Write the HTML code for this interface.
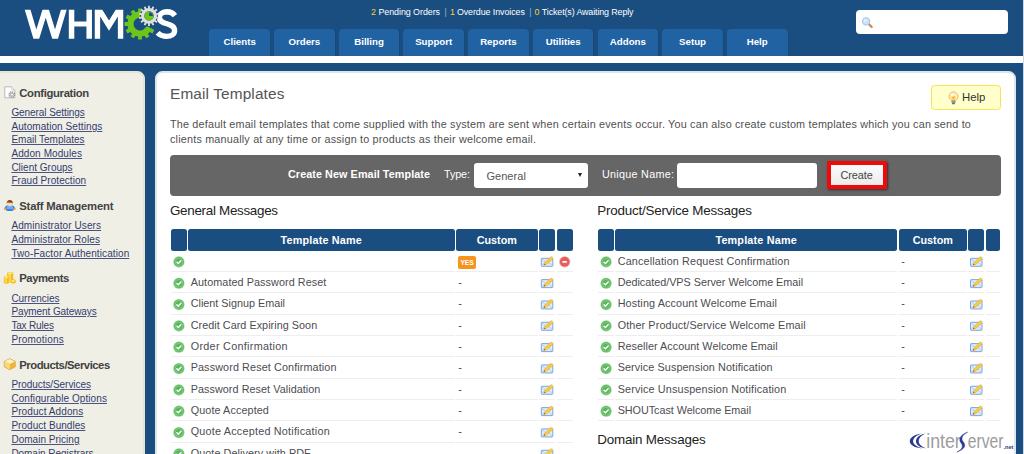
<!DOCTYPE html>
<html>
<head>
<meta charset="utf-8">
<title>WHMCS - Email Templates</title>
<style>
*{box-sizing:border-box;margin:0;padding:0}
html,body{width:1024px;height:454px;overflow:hidden}
body{background:#1a4d80;font-family:"Liberation Sans",sans-serif;position:relative;color:#333}
.abs{position:absolute;white-space:nowrap}
.tab{top:29px;height:26.6px;width:60.7px;background:#2162a3;border-radius:4px 4px 0 0;color:#fff;font-weight:bold;font-size:9.7px;text-align:center;line-height:25.6px;box-shadow:1px 0 0 rgba(0,0,0,.06)}
#stats{color:#fff}
#stats b{color:#f8d030;font-weight:normal}
.sh{color:#424242}
.sl{color:#333c6e;text-decoration:underline;text-decoration-thickness:1px;text-underline-offset:1px;text-decoration-color:#4a5384}
.th{top:229px;height:21.5px;background:#1a4d80;color:#fff;font-weight:bold;font-size:10.8px;text-align:center;line-height:23.4px;border-radius:2.5px;overflow:hidden}
</style>
</head>
<body>
<div class="abs" style="left:0;top:0;width:1024px;height:56px;background:#1a4d80"></div>
<div class="abs" style="left:0;top:55.6px;width:1024px;height:7.2px;background:#fff"></div>
<svg class="abs" style="left:0;top:0" width="200" height="56" viewBox="0 0 200 56"><defs><clipPath id="lc"><rect x="0" y="9.7" width="200" height="29.1"/></clipPath></defs><g clip-path="url(#lc)" fill="none" stroke="#fff" stroke-width="5.5" stroke-linejoin="miter" stroke-miterlimit="10"><polyline points="26.7,6.7 36.3,38.8 45.7,8.5 55.1,38.8 64.7,6.7"/><path d="M71.55,5V45M89.2,5V45" /><path d="M71,24.0H90" stroke-width="5.2"/><polyline points="97.45,45 97.45,7.0 109,25.6 120.55,7.0 120.55,45" stroke-width="5.4"/></g><path d="M175.0,15.6C173,13.1 170.3,11.9 167,11.8C162.5,11.8 159.4,14 159.4,17.4C159.4,25.5 174.6,22 174.6,30.4C174.6,34.2 171.2,36.4 166.6,36.4C163,36.4 159.8,35.2 157.6,32.8" fill="none" stroke="#fff" stroke-width="5.4"/><polygon points="138.00,12.67 138.10,8.52 141.90,8.52 142.00,12.67" fill="#6cc51c"/><polygon points="150.81,27.93 154.36,30.10 152.46,33.39 148.81,31.39" fill="#6cc51c"/><polygon points="147.39,32.81 149.39,36.46 146.10,38.36 143.93,34.81" fill="#6cc51c"/><polygon points="142.00,35.33 141.90,39.48 138.10,39.48 138.00,35.33" fill="#6cc51c"/><polygon points="136.07,34.81 133.90,38.36 130.61,36.46 132.61,32.81" fill="#6cc51c"/><polygon points="131.19,31.39 127.54,33.39 125.64,30.10 129.19,27.93" fill="#6cc51c"/><polygon points="128.67,26.00 124.52,25.90 124.52,22.10 128.67,22.00" fill="#6cc51c"/><polygon points="129.19,20.07 125.64,17.90 127.54,14.61 131.19,16.61" fill="#6cc51c"/><polygon points="132.61,15.19 130.61,11.54 133.90,9.64 136.07,13.19" fill="#6cc51c"/><path d="M147.73,29.61A9.55,9.55 0 1 1 143.58,15.15" fill="none" stroke="#6cc51c" stroke-width="6.1" stroke-linecap="round"/><circle cx="149.00" cy="15.90" r="9.0" fill="#1a4d80"/><polygon points="148.07,8.86 148.07,5.74 149.93,5.74 149.93,8.86" fill="#dedede"/><polygon points="151.22,9.16 152.57,6.34 154.25,7.15 152.89,9.96" fill="#dedede"/><polygon points="153.93,10.79 156.36,8.84 157.52,10.30 155.08,12.24" fill="#dedede"/><polygon points="155.66,13.43 158.69,12.73 159.11,14.55 156.07,15.24" fill="#dedede"/><polygon points="156.07,16.56 159.11,17.25 158.69,19.07 155.66,18.37" fill="#dedede"/><polygon points="155.08,19.56 157.52,21.50 156.36,22.96 153.93,21.01" fill="#dedede"/><polygon points="152.89,21.84 154.25,24.65 152.57,25.46 151.22,22.64" fill="#dedede"/><polygon points="149.93,22.94 149.93,26.06 148.07,26.06 148.07,22.94" fill="#dedede"/><polygon points="146.78,22.64 145.43,25.46 143.75,24.65 145.11,21.84" fill="#dedede"/><polygon points="144.07,21.01 141.64,22.96 140.48,21.50 142.92,19.56" fill="#dedede"/><polygon points="142.34,18.37 139.31,19.07 138.89,17.25 141.93,16.56" fill="#dedede"/><polygon points="141.93,15.24 138.89,14.55 139.31,12.73 142.34,13.43" fill="#dedede"/><polygon points="142.92,12.24 140.48,10.30 141.64,8.84 144.07,10.79" fill="#dedede"/><polygon points="145.11,9.96 143.75,7.15 145.43,6.34 146.78,9.16" fill="#dedede"/><circle cx="149.00" cy="15.90" r="6.3" fill="none" stroke="#dedede" stroke-width="3.2"/><circle cx="149.00" cy="15.90" r="4.6" fill="#6cc51c"/><path d="M149.20,16.00L149.20,12.30A3.6,3.6 0 0 1 152.90,16.00Z" fill="#1a4d80"/></svg>
<div class="abs " style="left:371.00px;top:8.00px;font-size:8.90px;line-height:1;color:#f8d030;">2</div>
<div class="abs " style="left:378.40px;top:8.00px;font-size:8.90px;line-height:1;letter-spacing:-0.041px;color:#fff;">Pending Orders</div>
<div class="abs " style="left:444.40px;top:8.00px;font-size:8.90px;line-height:1;color:#8fb4dc;">|</div>
<div class="abs " style="left:450.00px;top:8.00px;font-size:8.90px;line-height:1;color:#f8d030;">1</div>
<div class="abs " style="left:456.90px;top:8.00px;font-size:8.90px;line-height:1;letter-spacing:-0.071px;color:#fff;">Overdue Invoices</div>
<div class="abs " style="left:529.20px;top:8.00px;font-size:8.90px;line-height:1;color:#8fb4dc;">|</div>
<div class="abs " style="left:534.60px;top:8.00px;font-size:8.90px;line-height:1;color:#f8d030;">0</div>
<div class="abs " style="left:541.80px;top:8.00px;font-size:8.90px;line-height:1;letter-spacing:-0.107px;color:#fff;">Ticket(s) Awaiting Reply</div>
<div class="abs tab" style="left:209.30px">Clients</div>
<div class="abs tab" style="left:274.00px">Orders</div>
<div class="abs tab" style="left:338.70px">Billing</div>
<div class="abs tab" style="left:403.40px">Support</div>
<div class="abs tab" style="left:468.10px">Reports</div>
<div class="abs tab" style="left:532.80px">Utilities</div>
<div class="abs tab" style="left:597.50px">Addons</div>
<div class="abs tab" style="left:662.20px">Setup</div>
<div class="abs tab" style="left:726.90px">Help</div>
<div class="abs" style="left:856px;top:9.9px;width:152px;height:24.4px;background:#fff;border-radius:4px"></div>
<svg class="abs" style="left:861px;top:16px;overflow:visible" width="13" height="13" viewBox="0 0 13 13"><g transform="translate(0.50,0.80) scale(1.0000,1.0000)"><path d="M6.8,6.8L10.2,10.2" stroke="#c98b55" stroke-width="2.3" stroke-linecap="round"/><circle cx="4.6" cy="4.6" r="3.6" fill="#cfe1f7" stroke="#a9c6ec" stroke-width="1.1"/><circle cx="3.8" cy="3.8" r="1.4" fill="#eaf3fd"/></g></svg>
<div class="abs" style="left:1023px;top:0;width:1px;height:454px;background:#cfd8e2"></div>
<div class="abs" style="left:-5px;top:70.8px;width:149.9px;height:400px;background:#f0efe6;border:2.4px solid #e8e4d2;border-radius:0 7.5px 0 0"></div>
<svg class="abs" style="left:4px;top:86px;overflow:visible" width="14" height="14" viewBox="0 0 14 14"><g transform="translate(0.00,0.00) scale(1.0000,1.0000)"><path d="M0.8,0.8H7.8L10.8,3.8V11.8H0.8Z" fill="#fdfdfd" stroke="#b9b9b9" stroke-width="1"/><path d="M7.8,0.8V3.8H10.8" fill="#eee" stroke="#c4c4c4" stroke-width="0.7"/><circle cx="7.9" cy="8.6" r="2.5" fill="none" stroke="#9a9a9a" stroke-width="1.9" stroke-dasharray="1.2 0.75"/><circle cx="7.9" cy="8.6" r="1.9" fill="#b5b5b5"/><circle cx="8.0" cy="8.6" r="0.9" fill="#fff"/></g></svg>
<svg class="abs" style="left:4px;top:199px;overflow:visible" width="13" height="13" viewBox="0 0 13 13"><g transform="translate(0.00,0.60) scale(1.0000,1.0000)"><rect x="0" y="8" width="2.2" height="2.4" rx="0.9" fill="#e8993c"/><rect x="9.3" y="8" width="2.2" height="2.4" rx="0.9" fill="#e8993c"/><path d="M1,8.2C1,6.6 2.4,5.6 4,5.6H7.6C9.2,5.6 10.6,6.6 10.6,8.2L9.4,8.8V10.4C9.4,11 8.8,11.3 8,11.3H3.6C2.8,11.3 2.2,11 2.2,10.4V8.8Z" fill="#3f7fe6"/><path d="M2.8,7C2.8,6.4 3.6,6.2 4.2,6.2H7.4C8,6.2 8.8,6.4 8.8,7V9.4H2.8Z" fill="#6fb0fa"/><ellipse cx="5.8" cy="4.1" rx="2.7" ry="2.5" fill="#f6d8b4"/><path d="M2.8,4.4C2.4,1.8 3.8,0.3 5.8,0.3C7.8,0.3 9.2,1.8 8.8,4.4C8.4,3.2 7.6,2.9 6.6,3.1C5.4,3.3 4,3.1 3.4,3.0C3.1,3.4 3,3.8 2.8,4.4Z" fill="#8a4614"/></g></svg>
<svg class="abs" style="left:3px;top:271px;overflow:visible" width="14" height="14" viewBox="0 0 14 14"><g transform="translate(0.60,0.60) scale(1.0000,1.0000)"><rect x="3.6" y="0.3" width="6" height="10.6" rx="2.2" ry="1.2" fill="#f3bd17"/><rect x="4.6" y="0.8" width="2.8" height="9.6" rx="1" fill="#fbd84a"/><ellipse cx="6.6" cy="1.6" rx="2.6" ry="1" fill="#ffe780"/><rect x="0.2" y="4.4" width="5" height="7.8" rx="2" ry="1.2" fill="#f3bd17"/><rect x="1" y="5" width="2.4" height="6.6" rx="1" fill="#fbd84a"/><ellipse cx="2.7" cy="5.6" rx="2.1" ry="0.9" fill="#ffe780"/><ellipse cx="9.8" cy="9.8" rx="2.6" ry="2.1" fill="#f3bd17"/><ellipse cx="9.6" cy="9.4" rx="1.7" ry="1.1" fill="#ffe98a"/></g></svg>
<svg class="abs" style="left:3px;top:358px;overflow:visible" width="14" height="14" viewBox="0 0 14 14"><g transform="translate(0.70,0.10) scale(0.9615,0.9462)"><path d="M6.4,0.6L12,3.5V9.2L6.4,12.2L0.6,9.2V3.5Z" fill="#f6cf6a" stroke="#dfa540" stroke-width="1" stroke-linejoin="round"/><path d="M6.4,0.9L11.6,3.6L6.4,6.3L1.0,3.6Z" fill="#fcecc0"/><path d="M6.4,6.3L11.6,3.6V9.0L6.4,11.8Z" fill="#efb530"/><path d="M6.4,6.3L1.0,3.6V9.0L6.4,11.8Z" fill="#f9d878"/><path d="M3.6,2.2L8.9,5.0" stroke="#fff6dc" stroke-width="1.2"/></g></svg>
<div class="abs sh" style="left:19.30px;top:88.00px;font-size:11.30px;line-height:1;letter-spacing:-0.339px;font-weight:bold;">Configuration</div>
<div class="abs sl" style="left:11.40px;top:108.00px;font-size:10.00px;line-height:1;letter-spacing:-0.073px;">General Settings</div>
<div class="abs sl" style="left:11.40px;top:122.00px;font-size:10.00px;line-height:1;letter-spacing:0.078px;">Automation Settings</div>
<div class="abs sl" style="left:11.40px;top:135.00px;font-size:10.00px;line-height:1;letter-spacing:0.001px;">Email Templates</div>
<div class="abs sl" style="left:11.40px;top:149.00px;font-size:10.00px;line-height:1;letter-spacing:0.092px;">Addon Modules</div>
<div class="abs sl" style="left:11.40px;top:163.00px;font-size:10.00px;line-height:1;letter-spacing:0.005px;">Client Groups</div>
<div class="abs sl" style="left:11.40px;top:176.00px;font-size:10.00px;line-height:1;letter-spacing:0.052px;">Fraud Protection</div>
<div class="abs sh" style="left:19.30px;top:201.00px;font-size:11.30px;line-height:1;letter-spacing:-0.208px;font-weight:bold;">Staff Management</div>
<div class="abs sl" style="left:11.40px;top:221.00px;font-size:10.00px;line-height:1;letter-spacing:0.100px;">Administrator Users</div>
<div class="abs sl" style="left:11.40px;top:235.00px;font-size:10.00px;line-height:1;letter-spacing:0.069px;">Administrator Roles</div>
<div class="abs sl" style="left:11.40px;top:249.00px;font-size:10.00px;line-height:1;letter-spacing:0.091px;">Two-Factor Authentication</div>
<div class="abs sh" style="left:19.30px;top:273.00px;font-size:11.30px;line-height:1;letter-spacing:-0.484px;font-weight:bold;">Payments</div>
<div class="abs sl" style="left:11.40px;top:294.00px;font-size:10.00px;line-height:1;letter-spacing:-0.028px;">Currencies</div>
<div class="abs sl" style="left:11.40px;top:307.00px;font-size:10.00px;line-height:1;letter-spacing:-0.094px;">Payment Gateways</div>
<div class="abs sl" style="left:11.40px;top:321.00px;font-size:10.00px;line-height:1;letter-spacing:-0.176px;">Tax Rules</div>
<div class="abs sl" style="left:11.40px;top:335.00px;font-size:10.00px;line-height:1;letter-spacing:0.191px;">Promotions</div>
<div class="abs sh" style="left:19.30px;top:360.00px;font-size:11.30px;line-height:1;letter-spacing:-0.482px;font-weight:bold;">Products/Services</div>
<div class="abs sl" style="left:11.40px;top:380.00px;font-size:10.00px;line-height:1;letter-spacing:-0.068px;">Products/Services</div>
<div class="abs sl" style="left:11.40px;top:394.00px;font-size:10.00px;line-height:1;letter-spacing:0.082px;">Configurable Options</div>
<div class="abs sl" style="left:11.40px;top:407.00px;font-size:10.00px;line-height:1;letter-spacing:0.092px;">Product Addons</div>
<div class="abs sl" style="left:11.40px;top:421.00px;font-size:10.00px;line-height:1;letter-spacing:0.037px;">Product Bundles</div>
<div class="abs sl" style="left:11.40px;top:435.00px;font-size:10.00px;line-height:1;letter-spacing:0.023px;">Domain Pricing</div>
<div class="abs sl" style="left:11.40px;top:449.00px;font-size:10.00px;line-height:1;letter-spacing:-0.044px;">Domain Registrars</div>
<div class="abs" style="left:154.8px;top:70.8px;width:861px;height:400px;background:#fff;border:2.6px solid #dfe4ea;border-radius:7.5px"></div>
<div class="abs " style="left:170.00px;top:86.00px;font-size:15.40px;line-height:1;letter-spacing:0.122px;color:#555;">Email Templates</div>
<div class="abs" style="left:931px;top:85.2px;width:69.8px;height:24.5px;background:#ffffcc;border:1.2px solid #f8e352;border-radius:3.5px"></div>
<svg class="abs" style="left:947px;top:91px;overflow:visible" width="13" height="15" viewBox="0 0 13 15"><g transform="translate(0.50,0.00) scale(1.0000,1.0000)"><circle cx="6" cy="5.4" r="4.5" fill="#fdf0bc" stroke="#eaa648" stroke-width="0.8"/><path d="M4.2,5.2H7.8V8.6H4.2Z" fill="#f7c23a"/><circle cx="4.8" cy="3.8" r="1.6" fill="#fffbe6"/><rect x="4.0" y="9.4" width="4.0" height="3.0" rx="0.8" fill="#8e929a"/><rect x="4.7" y="12.0" width="2.6" height="1.2" rx="0.5" fill="#5d6068"/></g></svg>
<div class="abs " style="left:962.00px;top:92.00px;font-size:11.40px;line-height:1;color:#333;">Help</div>
<div class="abs " style="left:170.00px;top:119.00px;font-size:10.80px;line-height:1;letter-spacing:0.190px;color:#505050;">The default email templates that come supplied with the system are sent when certain events occur. You can also create custom templates which you can send to</div>
<div class="abs " style="left:170.00px;top:134.00px;font-size:10.80px;line-height:1;letter-spacing:0.195px;color:#505050;">clients manually at any time or assign to products as their welcome email.</div>
<div class="abs" style="left:170px;top:154.6px;width:830.8px;height:41.3px;background:#666;border-radius:4px"></div>
<div class="abs " style="left:288.00px;top:169.00px;font-size:10.80px;line-height:1;letter-spacing:0.073px;font-weight:bold;color:#fff;">Create New Email Template</div>
<div class="abs " style="left:444.00px;top:169.00px;font-size:10.80px;line-height:1;letter-spacing:-0.104px;color:#fff;">Type:</div>
<div class="abs" style="left:474px;top:162.6px;width:114.3px;height:25.2px;background:#fff;border-radius:3px"></div>
<div class="abs " style="left:486.40px;top:171.00px;font-size:11.00px;line-height:1;letter-spacing:0.061px;color:#555;">General</div>
<div class="abs" style="left:578.4px;top:173.2px;width:0;height:0;border-left:2.5px solid transparent;border-right:2.5px solid transparent;border-top:4.4px solid #222"></div>
<div class="abs " style="left:602.00px;top:169.00px;font-size:10.80px;line-height:1;letter-spacing:0.270px;color:#fff;">Unique Name:</div>
<div class="abs" style="left:677px;top:162.6px;width:140px;height:25.2px;background:#fff;border-radius:3px"></div>
<div class="abs" style="left:827.3px;top:160.8px;width:59.6px;height:28.6px;background:linear-gradient(#fbfbfb,#ececec);border:4.1px solid #ee0a0a;border-radius:1px;box-shadow:1px 1px 2.5px rgba(0,0,0,.55)"></div>
<div class="abs " style="left:840.40px;top:170.00px;font-size:10.90px;line-height:1;letter-spacing:-0.043px;color:#444;">Create</div>
<div class="abs " style="left:170.00px;top:204.00px;font-size:13.40px;line-height:1;letter-spacing:-0.291px;color:#222;">General Messages</div>
<div class="abs th" style="left:170.50px;width:16.30px"></div>
<div class="abs th" style="left:188.00px;width:266.50px"><span style="letter-spacing:0.19px">Template Name</span></div>
<div class="abs th" style="left:456.00px;width:81.60px">Custom</div>
<div class="abs th" style="left:539.00px;width:16.40px"></div>
<div class="abs th" style="left:557.00px;width:16.00px"></div>
<div class="abs" style="left:170.50px;top:270.90px;width:16.30px;height:1px;background:#eeeeee"></div>
<div class="abs" style="left:188.00px;top:270.90px;width:266.50px;height:1px;background:#eeeeee"></div>
<div class="abs" style="left:456.00px;top:270.90px;width:81.60px;height:1px;background:#eeeeee"></div>
<div class="abs" style="left:539.00px;top:270.90px;width:16.40px;height:1px;background:#eeeeee"></div>
<div class="abs" style="left:557.00px;top:270.90px;width:16.00px;height:1px;background:#eeeeee"></div>
<svg class="abs" style="left:172px;top:255px;overflow:visible" width="14" height="14" viewBox="0 0 14 14"><g transform="translate(0.40,0.40) scale(1.0000,1.0000)"><circle cx="6.5" cy="6.5" r="5.6" fill="#93d492"/><circle cx="6.5" cy="6.5" r="4.9" fill="#58b658"/><circle cx="6.5" cy="6.5" r="3.9" fill="none" stroke="#8fd48f" stroke-width="0.7"/><path d="M4.5,6.8L5.9,8.1L8.5,5.3" fill="none" stroke="#fff" stroke-width="1.45" stroke-linecap="round" stroke-linejoin="round"/></g></svg>
<div class="abs" style="left:458.20px;top:256.20px;width:17.8px;height:12.6px;background:#f7941d;border-radius:2px;color:#fff;font-size:6.7px;font-weight:bold;text-align:center;line-height:13px">YES</div>
<svg class="abs" style="left:540px;top:255px;overflow:visible" width="15" height="13" viewBox="0 0 15 13"><g transform="translate(0.80,0.70) scale(1.0000,1.0000)"><rect x="0.5" y="2.6" width="11.5" height="8" rx="0.6" fill="#dfeafa" stroke="#7fa3dc" stroke-width="1"/><path d="M1,3.2L6.2,7.6L11.5,3.2M1,10L4.6,6.4M11.5,10L7.8,6.4" fill="none" stroke="#a9c3ec" stroke-width="0.8"/><path d="M3.0,9.4L3.9,6.9L10.2,1.0L12.3,2.9L5.8,8.7Z" fill="#f7cf3e" stroke="#d9a520" stroke-width="0.5"/><path d="M10.2,1.0L11,0.4L12.9,2.2L12.3,2.9Z" fill="#f3c9a0"/><path d="M3.0,9.4L3.5,8.0L4.6,9.0Z" fill="#8a4a1a"/></g></svg>
<svg class="abs" style="left:558px;top:255px;overflow:visible" width="14" height="14" viewBox="0 0 14 14"><g transform="translate(0.20,0.30) scale(1.0000,1.0000)"><circle cx="6.5" cy="6.5" r="5.6" fill="#f3aca8"/><circle cx="6.5" cy="6.5" r="4.8" fill="#e55e5a"/><rect x="4.2" y="5.6" width="4.5" height="1.9" rx="0.4" fill="#fff"/></g></svg>
<div class="abs" style="left:170.50px;top:292.23px;width:16.30px;height:1px;background:#eeeeee"></div>
<div class="abs" style="left:188.00px;top:292.23px;width:266.50px;height:1px;background:#eeeeee"></div>
<div class="abs" style="left:456.00px;top:292.23px;width:81.60px;height:1px;background:#eeeeee"></div>
<div class="abs" style="left:539.00px;top:292.23px;width:16.40px;height:1px;background:#eeeeee"></div>
<div class="abs" style="left:557.00px;top:292.23px;width:16.00px;height:1px;background:#eeeeee"></div>
<svg class="abs" style="left:172px;top:276px;overflow:visible" width="14" height="14" viewBox="0 0 14 14"><g transform="translate(0.40,0.73) scale(1.0000,1.0000)"><circle cx="6.5" cy="6.5" r="5.6" fill="#93d492"/><circle cx="6.5" cy="6.5" r="4.9" fill="#58b658"/><circle cx="6.5" cy="6.5" r="3.9" fill="none" stroke="#8fd48f" stroke-width="0.7"/><path d="M4.5,6.8L5.9,8.1L8.5,5.3" fill="none" stroke="#fff" stroke-width="1.45" stroke-linecap="round" stroke-linejoin="round"/></g></svg>
<div class="abs " style="left:190.70px;top:277.00px;font-size:10.80px;line-height:1;letter-spacing:0.080px;color:#4c4c52;">Automated Password Reset</div>
<div class="abs " style="left:458.20px;top:277.00px;font-size:10.80px;line-height:1;color:#444;">-</div>
<svg class="abs" style="left:540px;top:277px;overflow:visible" width="15" height="13" viewBox="0 0 15 13"><g transform="translate(0.80,0.03) scale(1.0000,1.0000)"><rect x="0.5" y="2.6" width="11.5" height="8" rx="0.6" fill="#dfeafa" stroke="#7fa3dc" stroke-width="1"/><path d="M1,3.2L6.2,7.6L11.5,3.2M1,10L4.6,6.4M11.5,10L7.8,6.4" fill="none" stroke="#a9c3ec" stroke-width="0.8"/><path d="M3.0,9.4L3.9,6.9L10.2,1.0L12.3,2.9L5.8,8.7Z" fill="#f7cf3e" stroke="#d9a520" stroke-width="0.5"/><path d="M10.2,1.0L11,0.4L12.9,2.2L12.3,2.9Z" fill="#f3c9a0"/><path d="M3.0,9.4L3.5,8.0L4.6,9.0Z" fill="#8a4a1a"/></g></svg>
<div class="abs" style="left:170.50px;top:313.56px;width:16.30px;height:1px;background:#eeeeee"></div>
<div class="abs" style="left:188.00px;top:313.56px;width:266.50px;height:1px;background:#eeeeee"></div>
<div class="abs" style="left:456.00px;top:313.56px;width:81.60px;height:1px;background:#eeeeee"></div>
<div class="abs" style="left:539.00px;top:313.56px;width:16.40px;height:1px;background:#eeeeee"></div>
<div class="abs" style="left:557.00px;top:313.56px;width:16.00px;height:1px;background:#eeeeee"></div>
<svg class="abs" style="left:172px;top:298px;overflow:visible" width="14" height="14" viewBox="0 0 14 14"><g transform="translate(0.40,0.06) scale(1.0000,1.0000)"><circle cx="6.5" cy="6.5" r="5.6" fill="#93d492"/><circle cx="6.5" cy="6.5" r="4.9" fill="#58b658"/><circle cx="6.5" cy="6.5" r="3.9" fill="none" stroke="#8fd48f" stroke-width="0.7"/><path d="M4.5,6.8L5.9,8.1L8.5,5.3" fill="none" stroke="#fff" stroke-width="1.45" stroke-linecap="round" stroke-linejoin="round"/></g></svg>
<div class="abs " style="left:190.70px;top:298.00px;font-size:10.80px;line-height:1;letter-spacing:0.003px;color:#4c4c52;">Client Signup Email</div>
<div class="abs " style="left:458.20px;top:298.00px;font-size:10.80px;line-height:1;color:#444;">-</div>
<svg class="abs" style="left:540px;top:298px;overflow:visible" width="15" height="13" viewBox="0 0 15 13"><g transform="translate(0.80,0.36) scale(1.0000,1.0000)"><rect x="0.5" y="2.6" width="11.5" height="8" rx="0.6" fill="#dfeafa" stroke="#7fa3dc" stroke-width="1"/><path d="M1,3.2L6.2,7.6L11.5,3.2M1,10L4.6,6.4M11.5,10L7.8,6.4" fill="none" stroke="#a9c3ec" stroke-width="0.8"/><path d="M3.0,9.4L3.9,6.9L10.2,1.0L12.3,2.9L5.8,8.7Z" fill="#f7cf3e" stroke="#d9a520" stroke-width="0.5"/><path d="M10.2,1.0L11,0.4L12.9,2.2L12.3,2.9Z" fill="#f3c9a0"/><path d="M3.0,9.4L3.5,8.0L4.6,9.0Z" fill="#8a4a1a"/></g></svg>
<div class="abs" style="left:170.50px;top:334.89px;width:16.30px;height:1px;background:#eeeeee"></div>
<div class="abs" style="left:188.00px;top:334.89px;width:266.50px;height:1px;background:#eeeeee"></div>
<div class="abs" style="left:456.00px;top:334.89px;width:81.60px;height:1px;background:#eeeeee"></div>
<div class="abs" style="left:539.00px;top:334.89px;width:16.40px;height:1px;background:#eeeeee"></div>
<div class="abs" style="left:557.00px;top:334.89px;width:16.00px;height:1px;background:#eeeeee"></div>
<svg class="abs" style="left:172px;top:319px;overflow:visible" width="14" height="14" viewBox="0 0 14 14"><g transform="translate(0.40,0.39) scale(1.0000,1.0000)"><circle cx="6.5" cy="6.5" r="5.6" fill="#93d492"/><circle cx="6.5" cy="6.5" r="4.9" fill="#58b658"/><circle cx="6.5" cy="6.5" r="3.9" fill="none" stroke="#8fd48f" stroke-width="0.7"/><path d="M4.5,6.8L5.9,8.1L8.5,5.3" fill="none" stroke="#fff" stroke-width="1.45" stroke-linecap="round" stroke-linejoin="round"/></g></svg>
<div class="abs " style="left:190.70px;top:320.00px;font-size:10.80px;line-height:1;letter-spacing:0.043px;color:#4c4c52;">Credit Card Expiring Soon</div>
<div class="abs " style="left:458.20px;top:320.00px;font-size:10.80px;line-height:1;color:#444;">-</div>
<svg class="abs" style="left:540px;top:319px;overflow:visible" width="15" height="13" viewBox="0 0 15 13"><g transform="translate(0.80,0.69) scale(1.0000,1.0000)"><rect x="0.5" y="2.6" width="11.5" height="8" rx="0.6" fill="#dfeafa" stroke="#7fa3dc" stroke-width="1"/><path d="M1,3.2L6.2,7.6L11.5,3.2M1,10L4.6,6.4M11.5,10L7.8,6.4" fill="none" stroke="#a9c3ec" stroke-width="0.8"/><path d="M3.0,9.4L3.9,6.9L10.2,1.0L12.3,2.9L5.8,8.7Z" fill="#f7cf3e" stroke="#d9a520" stroke-width="0.5"/><path d="M10.2,1.0L11,0.4L12.9,2.2L12.3,2.9Z" fill="#f3c9a0"/><path d="M3.0,9.4L3.5,8.0L4.6,9.0Z" fill="#8a4a1a"/></g></svg>
<div class="abs" style="left:170.50px;top:356.22px;width:16.30px;height:1px;background:#eeeeee"></div>
<div class="abs" style="left:188.00px;top:356.22px;width:266.50px;height:1px;background:#eeeeee"></div>
<div class="abs" style="left:456.00px;top:356.22px;width:81.60px;height:1px;background:#eeeeee"></div>
<div class="abs" style="left:539.00px;top:356.22px;width:16.40px;height:1px;background:#eeeeee"></div>
<div class="abs" style="left:557.00px;top:356.22px;width:16.00px;height:1px;background:#eeeeee"></div>
<svg class="abs" style="left:172px;top:340px;overflow:visible" width="14" height="14" viewBox="0 0 14 14"><g transform="translate(0.40,0.72) scale(1.0000,1.0000)"><circle cx="6.5" cy="6.5" r="5.6" fill="#93d492"/><circle cx="6.5" cy="6.5" r="4.9" fill="#58b658"/><circle cx="6.5" cy="6.5" r="3.9" fill="none" stroke="#8fd48f" stroke-width="0.7"/><path d="M4.5,6.8L5.9,8.1L8.5,5.3" fill="none" stroke="#fff" stroke-width="1.45" stroke-linecap="round" stroke-linejoin="round"/></g></svg>
<div class="abs " style="left:190.70px;top:341.00px;font-size:10.80px;line-height:1;letter-spacing:0.298px;color:#4c4c52;">Order Confirmation</div>
<div class="abs " style="left:458.20px;top:341.00px;font-size:10.80px;line-height:1;color:#444;">-</div>
<svg class="abs" style="left:540px;top:341px;overflow:visible" width="15" height="13" viewBox="0 0 15 13"><g transform="translate(0.80,0.02) scale(1.0000,1.0000)"><rect x="0.5" y="2.6" width="11.5" height="8" rx="0.6" fill="#dfeafa" stroke="#7fa3dc" stroke-width="1"/><path d="M1,3.2L6.2,7.6L11.5,3.2M1,10L4.6,6.4M11.5,10L7.8,6.4" fill="none" stroke="#a9c3ec" stroke-width="0.8"/><path d="M3.0,9.4L3.9,6.9L10.2,1.0L12.3,2.9L5.8,8.7Z" fill="#f7cf3e" stroke="#d9a520" stroke-width="0.5"/><path d="M10.2,1.0L11,0.4L12.9,2.2L12.3,2.9Z" fill="#f3c9a0"/><path d="M3.0,9.4L3.5,8.0L4.6,9.0Z" fill="#8a4a1a"/></g></svg>
<div class="abs" style="left:170.50px;top:377.55px;width:16.30px;height:1px;background:#eeeeee"></div>
<div class="abs" style="left:188.00px;top:377.55px;width:266.50px;height:1px;background:#eeeeee"></div>
<div class="abs" style="left:456.00px;top:377.55px;width:81.60px;height:1px;background:#eeeeee"></div>
<div class="abs" style="left:539.00px;top:377.55px;width:16.40px;height:1px;background:#eeeeee"></div>
<div class="abs" style="left:557.00px;top:377.55px;width:16.00px;height:1px;background:#eeeeee"></div>
<svg class="abs" style="left:172px;top:362px;overflow:visible" width="14" height="14" viewBox="0 0 14 14"><g transform="translate(0.40,0.05) scale(1.0000,1.0000)"><circle cx="6.5" cy="6.5" r="5.6" fill="#93d492"/><circle cx="6.5" cy="6.5" r="4.9" fill="#58b658"/><circle cx="6.5" cy="6.5" r="3.9" fill="none" stroke="#8fd48f" stroke-width="0.7"/><path d="M4.5,6.8L5.9,8.1L8.5,5.3" fill="none" stroke="#fff" stroke-width="1.45" stroke-linecap="round" stroke-linejoin="round"/></g></svg>
<div class="abs " style="left:190.70px;top:362.00px;font-size:10.80px;line-height:1;letter-spacing:0.113px;color:#4c4c52;">Password Reset Confirmation</div>
<div class="abs " style="left:458.20px;top:362.00px;font-size:10.80px;line-height:1;color:#444;">-</div>
<svg class="abs" style="left:540px;top:362px;overflow:visible" width="15" height="13" viewBox="0 0 15 13"><g transform="translate(0.80,0.35) scale(1.0000,1.0000)"><rect x="0.5" y="2.6" width="11.5" height="8" rx="0.6" fill="#dfeafa" stroke="#7fa3dc" stroke-width="1"/><path d="M1,3.2L6.2,7.6L11.5,3.2M1,10L4.6,6.4M11.5,10L7.8,6.4" fill="none" stroke="#a9c3ec" stroke-width="0.8"/><path d="M3.0,9.4L3.9,6.9L10.2,1.0L12.3,2.9L5.8,8.7Z" fill="#f7cf3e" stroke="#d9a520" stroke-width="0.5"/><path d="M10.2,1.0L11,0.4L12.9,2.2L12.3,2.9Z" fill="#f3c9a0"/><path d="M3.0,9.4L3.5,8.0L4.6,9.0Z" fill="#8a4a1a"/></g></svg>
<div class="abs" style="left:170.50px;top:398.88px;width:16.30px;height:1px;background:#eeeeee"></div>
<div class="abs" style="left:188.00px;top:398.88px;width:266.50px;height:1px;background:#eeeeee"></div>
<div class="abs" style="left:456.00px;top:398.88px;width:81.60px;height:1px;background:#eeeeee"></div>
<div class="abs" style="left:539.00px;top:398.88px;width:16.40px;height:1px;background:#eeeeee"></div>
<div class="abs" style="left:557.00px;top:398.88px;width:16.00px;height:1px;background:#eeeeee"></div>
<svg class="abs" style="left:172px;top:383px;overflow:visible" width="14" height="14" viewBox="0 0 14 14"><g transform="translate(0.40,0.38) scale(1.0000,1.0000)"><circle cx="6.5" cy="6.5" r="5.6" fill="#93d492"/><circle cx="6.5" cy="6.5" r="4.9" fill="#58b658"/><circle cx="6.5" cy="6.5" r="3.9" fill="none" stroke="#8fd48f" stroke-width="0.7"/><path d="M4.5,6.8L5.9,8.1L8.5,5.3" fill="none" stroke="#fff" stroke-width="1.45" stroke-linecap="round" stroke-linejoin="round"/></g></svg>
<div class="abs " style="left:190.70px;top:384.00px;font-size:10.80px;line-height:1;letter-spacing:0.060px;color:#4c4c52;">Password Reset Validation</div>
<div class="abs " style="left:458.20px;top:384.00px;font-size:10.80px;line-height:1;color:#444;">-</div>
<svg class="abs" style="left:540px;top:383px;overflow:visible" width="15" height="13" viewBox="0 0 15 13"><g transform="translate(0.80,0.68) scale(1.0000,1.0000)"><rect x="0.5" y="2.6" width="11.5" height="8" rx="0.6" fill="#dfeafa" stroke="#7fa3dc" stroke-width="1"/><path d="M1,3.2L6.2,7.6L11.5,3.2M1,10L4.6,6.4M11.5,10L7.8,6.4" fill="none" stroke="#a9c3ec" stroke-width="0.8"/><path d="M3.0,9.4L3.9,6.9L10.2,1.0L12.3,2.9L5.8,8.7Z" fill="#f7cf3e" stroke="#d9a520" stroke-width="0.5"/><path d="M10.2,1.0L11,0.4L12.9,2.2L12.3,2.9Z" fill="#f3c9a0"/><path d="M3.0,9.4L3.5,8.0L4.6,9.0Z" fill="#8a4a1a"/></g></svg>
<div class="abs" style="left:170.50px;top:420.21px;width:16.30px;height:1px;background:#eeeeee"></div>
<div class="abs" style="left:188.00px;top:420.21px;width:266.50px;height:1px;background:#eeeeee"></div>
<div class="abs" style="left:456.00px;top:420.21px;width:81.60px;height:1px;background:#eeeeee"></div>
<div class="abs" style="left:539.00px;top:420.21px;width:16.40px;height:1px;background:#eeeeee"></div>
<div class="abs" style="left:557.00px;top:420.21px;width:16.00px;height:1px;background:#eeeeee"></div>
<svg class="abs" style="left:172px;top:404px;overflow:visible" width="14" height="14" viewBox="0 0 14 14"><g transform="translate(0.40,0.71) scale(1.0000,1.0000)"><circle cx="6.5" cy="6.5" r="5.6" fill="#93d492"/><circle cx="6.5" cy="6.5" r="4.9" fill="#58b658"/><circle cx="6.5" cy="6.5" r="3.9" fill="none" stroke="#8fd48f" stroke-width="0.7"/><path d="M4.5,6.8L5.9,8.1L8.5,5.3" fill="none" stroke="#fff" stroke-width="1.45" stroke-linecap="round" stroke-linejoin="round"/></g></svg>
<div class="abs " style="left:190.70px;top:405.00px;font-size:10.80px;line-height:1;letter-spacing:0.103px;color:#4c4c52;">Quote Accepted</div>
<div class="abs " style="left:458.20px;top:405.00px;font-size:10.80px;line-height:1;color:#444;">-</div>
<svg class="abs" style="left:540px;top:405px;overflow:visible" width="15" height="13" viewBox="0 0 15 13"><g transform="translate(0.80,0.01) scale(1.0000,1.0000)"><rect x="0.5" y="2.6" width="11.5" height="8" rx="0.6" fill="#dfeafa" stroke="#7fa3dc" stroke-width="1"/><path d="M1,3.2L6.2,7.6L11.5,3.2M1,10L4.6,6.4M11.5,10L7.8,6.4" fill="none" stroke="#a9c3ec" stroke-width="0.8"/><path d="M3.0,9.4L3.9,6.9L10.2,1.0L12.3,2.9L5.8,8.7Z" fill="#f7cf3e" stroke="#d9a520" stroke-width="0.5"/><path d="M10.2,1.0L11,0.4L12.9,2.2L12.3,2.9Z" fill="#f3c9a0"/><path d="M3.0,9.4L3.5,8.0L4.6,9.0Z" fill="#8a4a1a"/></g></svg>
<div class="abs" style="left:170.50px;top:441.54px;width:16.30px;height:1px;background:#eeeeee"></div>
<div class="abs" style="left:188.00px;top:441.54px;width:266.50px;height:1px;background:#eeeeee"></div>
<div class="abs" style="left:456.00px;top:441.54px;width:81.60px;height:1px;background:#eeeeee"></div>
<div class="abs" style="left:539.00px;top:441.54px;width:16.40px;height:1px;background:#eeeeee"></div>
<div class="abs" style="left:557.00px;top:441.54px;width:16.00px;height:1px;background:#eeeeee"></div>
<svg class="abs" style="left:172px;top:426px;overflow:visible" width="14" height="14" viewBox="0 0 14 14"><g transform="translate(0.40,0.04) scale(1.0000,1.0000)"><circle cx="6.5" cy="6.5" r="5.6" fill="#93d492"/><circle cx="6.5" cy="6.5" r="4.9" fill="#58b658"/><circle cx="6.5" cy="6.5" r="3.9" fill="none" stroke="#8fd48f" stroke-width="0.7"/><path d="M4.5,6.8L5.9,8.1L8.5,5.3" fill="none" stroke="#fff" stroke-width="1.45" stroke-linecap="round" stroke-linejoin="round"/></g></svg>
<div class="abs " style="left:190.70px;top:426.00px;font-size:10.80px;line-height:1;letter-spacing:0.220px;color:#4c4c52;">Quote Accepted Notification</div>
<div class="abs " style="left:458.20px;top:426.00px;font-size:10.80px;line-height:1;color:#444;">-</div>
<svg class="abs" style="left:540px;top:426px;overflow:visible" width="15" height="13" viewBox="0 0 15 13"><g transform="translate(0.80,0.34) scale(1.0000,1.0000)"><rect x="0.5" y="2.6" width="11.5" height="8" rx="0.6" fill="#dfeafa" stroke="#7fa3dc" stroke-width="1"/><path d="M1,3.2L6.2,7.6L11.5,3.2M1,10L4.6,6.4M11.5,10L7.8,6.4" fill="none" stroke="#a9c3ec" stroke-width="0.8"/><path d="M3.0,9.4L3.9,6.9L10.2,1.0L12.3,2.9L5.8,8.7Z" fill="#f7cf3e" stroke="#d9a520" stroke-width="0.5"/><path d="M10.2,1.0L11,0.4L12.9,2.2L12.3,2.9Z" fill="#f3c9a0"/><path d="M3.0,9.4L3.5,8.0L4.6,9.0Z" fill="#8a4a1a"/></g></svg>
<div class="abs" style="left:170.50px;top:462.87px;width:16.30px;height:1px;background:#eeeeee"></div>
<div class="abs" style="left:188.00px;top:462.87px;width:266.50px;height:1px;background:#eeeeee"></div>
<div class="abs" style="left:456.00px;top:462.87px;width:81.60px;height:1px;background:#eeeeee"></div>
<div class="abs" style="left:539.00px;top:462.87px;width:16.40px;height:1px;background:#eeeeee"></div>
<div class="abs" style="left:557.00px;top:462.87px;width:16.00px;height:1px;background:#eeeeee"></div>
<svg class="abs" style="left:172px;top:447px;overflow:visible" width="14" height="14" viewBox="0 0 14 14"><g transform="translate(0.40,0.37) scale(1.0000,1.0000)"><circle cx="6.5" cy="6.5" r="5.6" fill="#93d492"/><circle cx="6.5" cy="6.5" r="4.9" fill="#58b658"/><circle cx="6.5" cy="6.5" r="3.9" fill="none" stroke="#8fd48f" stroke-width="0.7"/><path d="M4.5,6.8L5.9,8.1L8.5,5.3" fill="none" stroke="#fff" stroke-width="1.45" stroke-linecap="round" stroke-linejoin="round"/></g></svg>
<div class="abs " style="left:190.70px;top:448.00px;font-size:10.80px;line-height:1;letter-spacing:0.080px;color:#4c4c52;">Quote Delivery with PDF</div>
<div class="abs " style="left:458.20px;top:448.00px;font-size:10.80px;line-height:1;color:#444;">-</div>
<svg class="abs" style="left:540px;top:447px;overflow:visible" width="15" height="13" viewBox="0 0 15 13"><g transform="translate(0.80,0.67) scale(1.0000,1.0000)"><rect x="0.5" y="2.6" width="11.5" height="8" rx="0.6" fill="#dfeafa" stroke="#7fa3dc" stroke-width="1"/><path d="M1,3.2L6.2,7.6L11.5,3.2M1,10L4.6,6.4M11.5,10L7.8,6.4" fill="none" stroke="#a9c3ec" stroke-width="0.8"/><path d="M3.0,9.4L3.9,6.9L10.2,1.0L12.3,2.9L5.8,8.7Z" fill="#f7cf3e" stroke="#d9a520" stroke-width="0.5"/><path d="M10.2,1.0L11,0.4L12.9,2.2L12.3,2.9Z" fill="#f3c9a0"/><path d="M3.0,9.4L3.5,8.0L4.6,9.0Z" fill="#8a4a1a"/></g></svg>
<div class="abs " style="left:597.30px;top:204.00px;font-size:13.40px;line-height:1;letter-spacing:-0.204px;color:#222;">Product/Service Messages</div>
<div class="abs th" style="left:597.70px;width:16.10px"></div>
<div class="abs th" style="left:615.00px;width:282.30px"><span style="letter-spacing:0.19px">Template Name</span></div>
<div class="abs th" style="left:899.00px;width:67.50px">Custom</div>
<div class="abs th" style="left:968.20px;width:15.70px"></div>
<div class="abs th" style="left:985.50px;width:14.90px"></div>
<div class="abs" style="left:597.70px;top:270.90px;width:16.10px;height:1px;background:#eeeeee"></div>
<div class="abs" style="left:615.00px;top:270.90px;width:282.30px;height:1px;background:#eeeeee"></div>
<div class="abs" style="left:899.00px;top:270.90px;width:67.50px;height:1px;background:#eeeeee"></div>
<div class="abs" style="left:968.20px;top:270.90px;width:15.70px;height:1px;background:#eeeeee"></div>
<div class="abs" style="left:985.50px;top:270.90px;width:14.90px;height:1px;background:#eeeeee"></div>
<svg class="abs" style="left:599px;top:255px;overflow:visible" width="14" height="14" viewBox="0 0 14 14"><g transform="translate(0.60,0.40) scale(1.0000,1.0000)"><circle cx="6.5" cy="6.5" r="5.6" fill="#93d492"/><circle cx="6.5" cy="6.5" r="4.9" fill="#58b658"/><circle cx="6.5" cy="6.5" r="3.9" fill="none" stroke="#8fd48f" stroke-width="0.7"/><path d="M4.5,6.8L5.9,8.1L8.5,5.3" fill="none" stroke="#fff" stroke-width="1.45" stroke-linecap="round" stroke-linejoin="round"/></g></svg>
<div class="abs " style="left:617.70px;top:256.00px;font-size:10.80px;line-height:1;letter-spacing:0.153px;color:#4c4c52;">Cancellation Request Confirmation</div>
<div class="abs " style="left:901.20px;top:256.00px;font-size:10.80px;line-height:1;color:#444;">-</div>
<svg class="abs" style="left:970px;top:255px;overflow:visible" width="15" height="13" viewBox="0 0 15 13"><g transform="translate(0.00,0.70) scale(1.0000,1.0000)"><rect x="0.5" y="2.6" width="11.5" height="8" rx="0.6" fill="#dfeafa" stroke="#7fa3dc" stroke-width="1"/><path d="M1,3.2L6.2,7.6L11.5,3.2M1,10L4.6,6.4M11.5,10L7.8,6.4" fill="none" stroke="#a9c3ec" stroke-width="0.8"/><path d="M3.0,9.4L3.9,6.9L10.2,1.0L12.3,2.9L5.8,8.7Z" fill="#f7cf3e" stroke="#d9a520" stroke-width="0.5"/><path d="M10.2,1.0L11,0.4L12.9,2.2L12.3,2.9Z" fill="#f3c9a0"/><path d="M3.0,9.4L3.5,8.0L4.6,9.0Z" fill="#8a4a1a"/></g></svg>
<div class="abs" style="left:597.70px;top:292.23px;width:16.10px;height:1px;background:#eeeeee"></div>
<div class="abs" style="left:615.00px;top:292.23px;width:282.30px;height:1px;background:#eeeeee"></div>
<div class="abs" style="left:899.00px;top:292.23px;width:67.50px;height:1px;background:#eeeeee"></div>
<div class="abs" style="left:968.20px;top:292.23px;width:15.70px;height:1px;background:#eeeeee"></div>
<div class="abs" style="left:985.50px;top:292.23px;width:14.90px;height:1px;background:#eeeeee"></div>
<svg class="abs" style="left:599px;top:276px;overflow:visible" width="14" height="14" viewBox="0 0 14 14"><g transform="translate(0.60,0.73) scale(1.0000,1.0000)"><circle cx="6.5" cy="6.5" r="5.6" fill="#93d492"/><circle cx="6.5" cy="6.5" r="4.9" fill="#58b658"/><circle cx="6.5" cy="6.5" r="3.9" fill="none" stroke="#8fd48f" stroke-width="0.7"/><path d="M4.5,6.8L5.9,8.1L8.5,5.3" fill="none" stroke="#fff" stroke-width="1.45" stroke-linecap="round" stroke-linejoin="round"/></g></svg>
<div class="abs " style="left:617.70px;top:277.00px;font-size:10.80px;line-height:1;letter-spacing:-0.014px;color:#4c4c52;">Dedicated/VPS Server Welcome Email</div>
<div class="abs " style="left:901.20px;top:277.00px;font-size:10.80px;line-height:1;color:#444;">-</div>
<svg class="abs" style="left:970px;top:277px;overflow:visible" width="15" height="13" viewBox="0 0 15 13"><g transform="translate(0.00,0.03) scale(1.0000,1.0000)"><rect x="0.5" y="2.6" width="11.5" height="8" rx="0.6" fill="#dfeafa" stroke="#7fa3dc" stroke-width="1"/><path d="M1,3.2L6.2,7.6L11.5,3.2M1,10L4.6,6.4M11.5,10L7.8,6.4" fill="none" stroke="#a9c3ec" stroke-width="0.8"/><path d="M3.0,9.4L3.9,6.9L10.2,1.0L12.3,2.9L5.8,8.7Z" fill="#f7cf3e" stroke="#d9a520" stroke-width="0.5"/><path d="M10.2,1.0L11,0.4L12.9,2.2L12.3,2.9Z" fill="#f3c9a0"/><path d="M3.0,9.4L3.5,8.0L4.6,9.0Z" fill="#8a4a1a"/></g></svg>
<div class="abs" style="left:597.70px;top:313.56px;width:16.10px;height:1px;background:#eeeeee"></div>
<div class="abs" style="left:615.00px;top:313.56px;width:282.30px;height:1px;background:#eeeeee"></div>
<div class="abs" style="left:899.00px;top:313.56px;width:67.50px;height:1px;background:#eeeeee"></div>
<div class="abs" style="left:968.20px;top:313.56px;width:15.70px;height:1px;background:#eeeeee"></div>
<div class="abs" style="left:985.50px;top:313.56px;width:14.90px;height:1px;background:#eeeeee"></div>
<svg class="abs" style="left:599px;top:298px;overflow:visible" width="14" height="14" viewBox="0 0 14 14"><g transform="translate(0.60,0.06) scale(1.0000,1.0000)"><circle cx="6.5" cy="6.5" r="5.6" fill="#93d492"/><circle cx="6.5" cy="6.5" r="4.9" fill="#58b658"/><circle cx="6.5" cy="6.5" r="3.9" fill="none" stroke="#8fd48f" stroke-width="0.7"/><path d="M4.5,6.8L5.9,8.1L8.5,5.3" fill="none" stroke="#fff" stroke-width="1.45" stroke-linecap="round" stroke-linejoin="round"/></g></svg>
<div class="abs " style="left:617.70px;top:298.00px;font-size:10.80px;line-height:1;letter-spacing:0.119px;color:#4c4c52;">Hosting Account Welcome Email</div>
<div class="abs " style="left:901.20px;top:298.00px;font-size:10.80px;line-height:1;color:#444;">-</div>
<svg class="abs" style="left:970px;top:298px;overflow:visible" width="15" height="13" viewBox="0 0 15 13"><g transform="translate(0.00,0.36) scale(1.0000,1.0000)"><rect x="0.5" y="2.6" width="11.5" height="8" rx="0.6" fill="#dfeafa" stroke="#7fa3dc" stroke-width="1"/><path d="M1,3.2L6.2,7.6L11.5,3.2M1,10L4.6,6.4M11.5,10L7.8,6.4" fill="none" stroke="#a9c3ec" stroke-width="0.8"/><path d="M3.0,9.4L3.9,6.9L10.2,1.0L12.3,2.9L5.8,8.7Z" fill="#f7cf3e" stroke="#d9a520" stroke-width="0.5"/><path d="M10.2,1.0L11,0.4L12.9,2.2L12.3,2.9Z" fill="#f3c9a0"/><path d="M3.0,9.4L3.5,8.0L4.6,9.0Z" fill="#8a4a1a"/></g></svg>
<div class="abs" style="left:597.70px;top:334.89px;width:16.10px;height:1px;background:#eeeeee"></div>
<div class="abs" style="left:615.00px;top:334.89px;width:282.30px;height:1px;background:#eeeeee"></div>
<div class="abs" style="left:899.00px;top:334.89px;width:67.50px;height:1px;background:#eeeeee"></div>
<div class="abs" style="left:968.20px;top:334.89px;width:15.70px;height:1px;background:#eeeeee"></div>
<div class="abs" style="left:985.50px;top:334.89px;width:14.90px;height:1px;background:#eeeeee"></div>
<svg class="abs" style="left:599px;top:319px;overflow:visible" width="14" height="14" viewBox="0 0 14 14"><g transform="translate(0.60,0.39) scale(1.0000,1.0000)"><circle cx="6.5" cy="6.5" r="5.6" fill="#93d492"/><circle cx="6.5" cy="6.5" r="4.9" fill="#58b658"/><circle cx="6.5" cy="6.5" r="3.9" fill="none" stroke="#8fd48f" stroke-width="0.7"/><path d="M4.5,6.8L5.9,8.1L8.5,5.3" fill="none" stroke="#fff" stroke-width="1.45" stroke-linecap="round" stroke-linejoin="round"/></g></svg>
<div class="abs " style="left:617.70px;top:320.00px;font-size:10.80px;line-height:1;letter-spacing:0.113px;color:#4c4c52;">Other Product/Service Welcome Email</div>
<div class="abs " style="left:901.20px;top:320.00px;font-size:10.80px;line-height:1;color:#444;">-</div>
<svg class="abs" style="left:970px;top:319px;overflow:visible" width="15" height="13" viewBox="0 0 15 13"><g transform="translate(0.00,0.69) scale(1.0000,1.0000)"><rect x="0.5" y="2.6" width="11.5" height="8" rx="0.6" fill="#dfeafa" stroke="#7fa3dc" stroke-width="1"/><path d="M1,3.2L6.2,7.6L11.5,3.2M1,10L4.6,6.4M11.5,10L7.8,6.4" fill="none" stroke="#a9c3ec" stroke-width="0.8"/><path d="M3.0,9.4L3.9,6.9L10.2,1.0L12.3,2.9L5.8,8.7Z" fill="#f7cf3e" stroke="#d9a520" stroke-width="0.5"/><path d="M10.2,1.0L11,0.4L12.9,2.2L12.3,2.9Z" fill="#f3c9a0"/><path d="M3.0,9.4L3.5,8.0L4.6,9.0Z" fill="#8a4a1a"/></g></svg>
<div class="abs" style="left:597.70px;top:356.22px;width:16.10px;height:1px;background:#eeeeee"></div>
<div class="abs" style="left:615.00px;top:356.22px;width:282.30px;height:1px;background:#eeeeee"></div>
<div class="abs" style="left:899.00px;top:356.22px;width:67.50px;height:1px;background:#eeeeee"></div>
<div class="abs" style="left:968.20px;top:356.22px;width:15.70px;height:1px;background:#eeeeee"></div>
<div class="abs" style="left:985.50px;top:356.22px;width:14.90px;height:1px;background:#eeeeee"></div>
<svg class="abs" style="left:599px;top:340px;overflow:visible" width="14" height="14" viewBox="0 0 14 14"><g transform="translate(0.60,0.72) scale(1.0000,1.0000)"><circle cx="6.5" cy="6.5" r="5.6" fill="#93d492"/><circle cx="6.5" cy="6.5" r="4.9" fill="#58b658"/><circle cx="6.5" cy="6.5" r="3.9" fill="none" stroke="#8fd48f" stroke-width="0.7"/><path d="M4.5,6.8L5.9,8.1L8.5,5.3" fill="none" stroke="#fff" stroke-width="1.45" stroke-linecap="round" stroke-linejoin="round"/></g></svg>
<div class="abs " style="left:617.70px;top:341.00px;font-size:10.80px;line-height:1;letter-spacing:0.039px;color:#4c4c52;">Reseller Account Welcome Email</div>
<div class="abs " style="left:901.20px;top:341.00px;font-size:10.80px;line-height:1;color:#444;">-</div>
<svg class="abs" style="left:970px;top:341px;overflow:visible" width="15" height="13" viewBox="0 0 15 13"><g transform="translate(0.00,0.02) scale(1.0000,1.0000)"><rect x="0.5" y="2.6" width="11.5" height="8" rx="0.6" fill="#dfeafa" stroke="#7fa3dc" stroke-width="1"/><path d="M1,3.2L6.2,7.6L11.5,3.2M1,10L4.6,6.4M11.5,10L7.8,6.4" fill="none" stroke="#a9c3ec" stroke-width="0.8"/><path d="M3.0,9.4L3.9,6.9L10.2,1.0L12.3,2.9L5.8,8.7Z" fill="#f7cf3e" stroke="#d9a520" stroke-width="0.5"/><path d="M10.2,1.0L11,0.4L12.9,2.2L12.3,2.9Z" fill="#f3c9a0"/><path d="M3.0,9.4L3.5,8.0L4.6,9.0Z" fill="#8a4a1a"/></g></svg>
<div class="abs" style="left:597.70px;top:377.55px;width:16.10px;height:1px;background:#eeeeee"></div>
<div class="abs" style="left:615.00px;top:377.55px;width:282.30px;height:1px;background:#eeeeee"></div>
<div class="abs" style="left:899.00px;top:377.55px;width:67.50px;height:1px;background:#eeeeee"></div>
<div class="abs" style="left:968.20px;top:377.55px;width:15.70px;height:1px;background:#eeeeee"></div>
<div class="abs" style="left:985.50px;top:377.55px;width:14.90px;height:1px;background:#eeeeee"></div>
<svg class="abs" style="left:599px;top:362px;overflow:visible" width="14" height="14" viewBox="0 0 14 14"><g transform="translate(0.60,0.05) scale(1.0000,1.0000)"><circle cx="6.5" cy="6.5" r="5.6" fill="#93d492"/><circle cx="6.5" cy="6.5" r="4.9" fill="#58b658"/><circle cx="6.5" cy="6.5" r="3.9" fill="none" stroke="#8fd48f" stroke-width="0.7"/><path d="M4.5,6.8L5.9,8.1L8.5,5.3" fill="none" stroke="#fff" stroke-width="1.45" stroke-linecap="round" stroke-linejoin="round"/></g></svg>
<div class="abs " style="left:617.70px;top:362.00px;font-size:10.80px;line-height:1;letter-spacing:0.101px;color:#4c4c52;">Service Suspension Notification</div>
<div class="abs " style="left:901.20px;top:362.00px;font-size:10.80px;line-height:1;color:#444;">-</div>
<svg class="abs" style="left:970px;top:362px;overflow:visible" width="15" height="13" viewBox="0 0 15 13"><g transform="translate(0.00,0.35) scale(1.0000,1.0000)"><rect x="0.5" y="2.6" width="11.5" height="8" rx="0.6" fill="#dfeafa" stroke="#7fa3dc" stroke-width="1"/><path d="M1,3.2L6.2,7.6L11.5,3.2M1,10L4.6,6.4M11.5,10L7.8,6.4" fill="none" stroke="#a9c3ec" stroke-width="0.8"/><path d="M3.0,9.4L3.9,6.9L10.2,1.0L12.3,2.9L5.8,8.7Z" fill="#f7cf3e" stroke="#d9a520" stroke-width="0.5"/><path d="M10.2,1.0L11,0.4L12.9,2.2L12.3,2.9Z" fill="#f3c9a0"/><path d="M3.0,9.4L3.5,8.0L4.6,9.0Z" fill="#8a4a1a"/></g></svg>
<div class="abs" style="left:597.70px;top:398.88px;width:16.10px;height:1px;background:#eeeeee"></div>
<div class="abs" style="left:615.00px;top:398.88px;width:282.30px;height:1px;background:#eeeeee"></div>
<div class="abs" style="left:899.00px;top:398.88px;width:67.50px;height:1px;background:#eeeeee"></div>
<div class="abs" style="left:968.20px;top:398.88px;width:15.70px;height:1px;background:#eeeeee"></div>
<div class="abs" style="left:985.50px;top:398.88px;width:14.90px;height:1px;background:#eeeeee"></div>
<svg class="abs" style="left:599px;top:383px;overflow:visible" width="14" height="14" viewBox="0 0 14 14"><g transform="translate(0.60,0.38) scale(1.0000,1.0000)"><circle cx="6.5" cy="6.5" r="5.6" fill="#93d492"/><circle cx="6.5" cy="6.5" r="4.9" fill="#58b658"/><circle cx="6.5" cy="6.5" r="3.9" fill="none" stroke="#8fd48f" stroke-width="0.7"/><path d="M4.5,6.8L5.9,8.1L8.5,5.3" fill="none" stroke="#fff" stroke-width="1.45" stroke-linecap="round" stroke-linejoin="round"/></g></svg>
<div class="abs " style="left:617.70px;top:384.00px;font-size:10.80px;line-height:1;letter-spacing:0.147px;color:#4c4c52;">Service Unsuspension Notification</div>
<div class="abs " style="left:901.20px;top:384.00px;font-size:10.80px;line-height:1;color:#444;">-</div>
<svg class="abs" style="left:970px;top:383px;overflow:visible" width="15" height="13" viewBox="0 0 15 13"><g transform="translate(0.00,0.68) scale(1.0000,1.0000)"><rect x="0.5" y="2.6" width="11.5" height="8" rx="0.6" fill="#dfeafa" stroke="#7fa3dc" stroke-width="1"/><path d="M1,3.2L6.2,7.6L11.5,3.2M1,10L4.6,6.4M11.5,10L7.8,6.4" fill="none" stroke="#a9c3ec" stroke-width="0.8"/><path d="M3.0,9.4L3.9,6.9L10.2,1.0L12.3,2.9L5.8,8.7Z" fill="#f7cf3e" stroke="#d9a520" stroke-width="0.5"/><path d="M10.2,1.0L11,0.4L12.9,2.2L12.3,2.9Z" fill="#f3c9a0"/><path d="M3.0,9.4L3.5,8.0L4.6,9.0Z" fill="#8a4a1a"/></g></svg>
<div class="abs" style="left:597.70px;top:420.21px;width:16.10px;height:1px;background:#eeeeee"></div>
<div class="abs" style="left:615.00px;top:420.21px;width:282.30px;height:1px;background:#eeeeee"></div>
<div class="abs" style="left:899.00px;top:420.21px;width:67.50px;height:1px;background:#eeeeee"></div>
<div class="abs" style="left:968.20px;top:420.21px;width:15.70px;height:1px;background:#eeeeee"></div>
<div class="abs" style="left:985.50px;top:420.21px;width:14.90px;height:1px;background:#eeeeee"></div>
<svg class="abs" style="left:599px;top:404px;overflow:visible" width="14" height="14" viewBox="0 0 14 14"><g transform="translate(0.60,0.71) scale(1.0000,1.0000)"><circle cx="6.5" cy="6.5" r="5.6" fill="#93d492"/><circle cx="6.5" cy="6.5" r="4.9" fill="#58b658"/><circle cx="6.5" cy="6.5" r="3.9" fill="none" stroke="#8fd48f" stroke-width="0.7"/><path d="M4.5,6.8L5.9,8.1L8.5,5.3" fill="none" stroke="#fff" stroke-width="1.45" stroke-linecap="round" stroke-linejoin="round"/></g></svg>
<div class="abs " style="left:617.70px;top:405.00px;font-size:10.80px;line-height:1;letter-spacing:-0.038px;color:#4c4c52;">SHOUTcast Welcome Email</div>
<div class="abs " style="left:901.20px;top:405.00px;font-size:10.80px;line-height:1;color:#444;">-</div>
<svg class="abs" style="left:970px;top:405px;overflow:visible" width="15" height="13" viewBox="0 0 15 13"><g transform="translate(0.00,0.01) scale(1.0000,1.0000)"><rect x="0.5" y="2.6" width="11.5" height="8" rx="0.6" fill="#dfeafa" stroke="#7fa3dc" stroke-width="1"/><path d="M1,3.2L6.2,7.6L11.5,3.2M1,10L4.6,6.4M11.5,10L7.8,6.4" fill="none" stroke="#a9c3ec" stroke-width="0.8"/><path d="M3.0,9.4L3.9,6.9L10.2,1.0L12.3,2.9L5.8,8.7Z" fill="#f7cf3e" stroke="#d9a520" stroke-width="0.5"/><path d="M10.2,1.0L11,0.4L12.9,2.2L12.3,2.9Z" fill="#f3c9a0"/><path d="M3.0,9.4L3.5,8.0L4.6,9.0Z" fill="#8a4a1a"/></g></svg>
<div class="abs " style="left:597.30px;top:433.00px;font-size:13.40px;line-height:1;letter-spacing:-0.184px;color:#222;">Domain Messages</div>
<svg class="abs" style="left:896px;top:414px" width="128" height="40" viewBox="0 0 128 40">
<path d="M25.6,19.4C18,20.4 13.6,23.8 13.8,27.4C14,31 18.6,33.6 26.4,34.4C20.6,32.8 17.2,30.4 17.1,27.3C17,24.2 20,21.4 25.6,19.4Z" fill="#2b3990"/>
<path d="M29.6,19.4C23.4,20.4 19.8,23.8 20,27.4C20.2,31 24,33.6 30.4,34.4C25.6,32.8 22.8,30.4 22.7,27.3C22.6,24.2 25,21.4 29.6,19.4Z" fill="#2b3990"/>
<text x="30.2" y="34" font-family="Liberation Sans, sans-serif" font-size="19.6" fill="#9c9c9c" textLength="34.6" lengthAdjust="spacingAndGlyphs">inter</text>
<path d="M71.6,18.2C66.4,20.8 64.4,24.4 67.2,27.8C70,31.2 69.4,35 61,38C66.6,35.2 67.4,32 65.2,29.2C62,25.2 64.4,20.6 71.6,18.2Z" fill="#2b3990" stroke="#2b3990" stroke-width="0.5" stroke-linejoin="round"/>
<text x="71.8" y="34" font-family="Liberation Sans, sans-serif" font-size="19.6" fill="#9c9c9c" textLength="35.6" lengthAdjust="spacingAndGlyphs">erver</text>
<text x="107.4" y="34.6" font-family="Liberation Sans, sans-serif" font-size="5.6" font-weight="bold" fill="#2b3990" textLength="10" lengthAdjust="spacingAndGlyphs">.net</text>
</svg>
</body>
</html>
